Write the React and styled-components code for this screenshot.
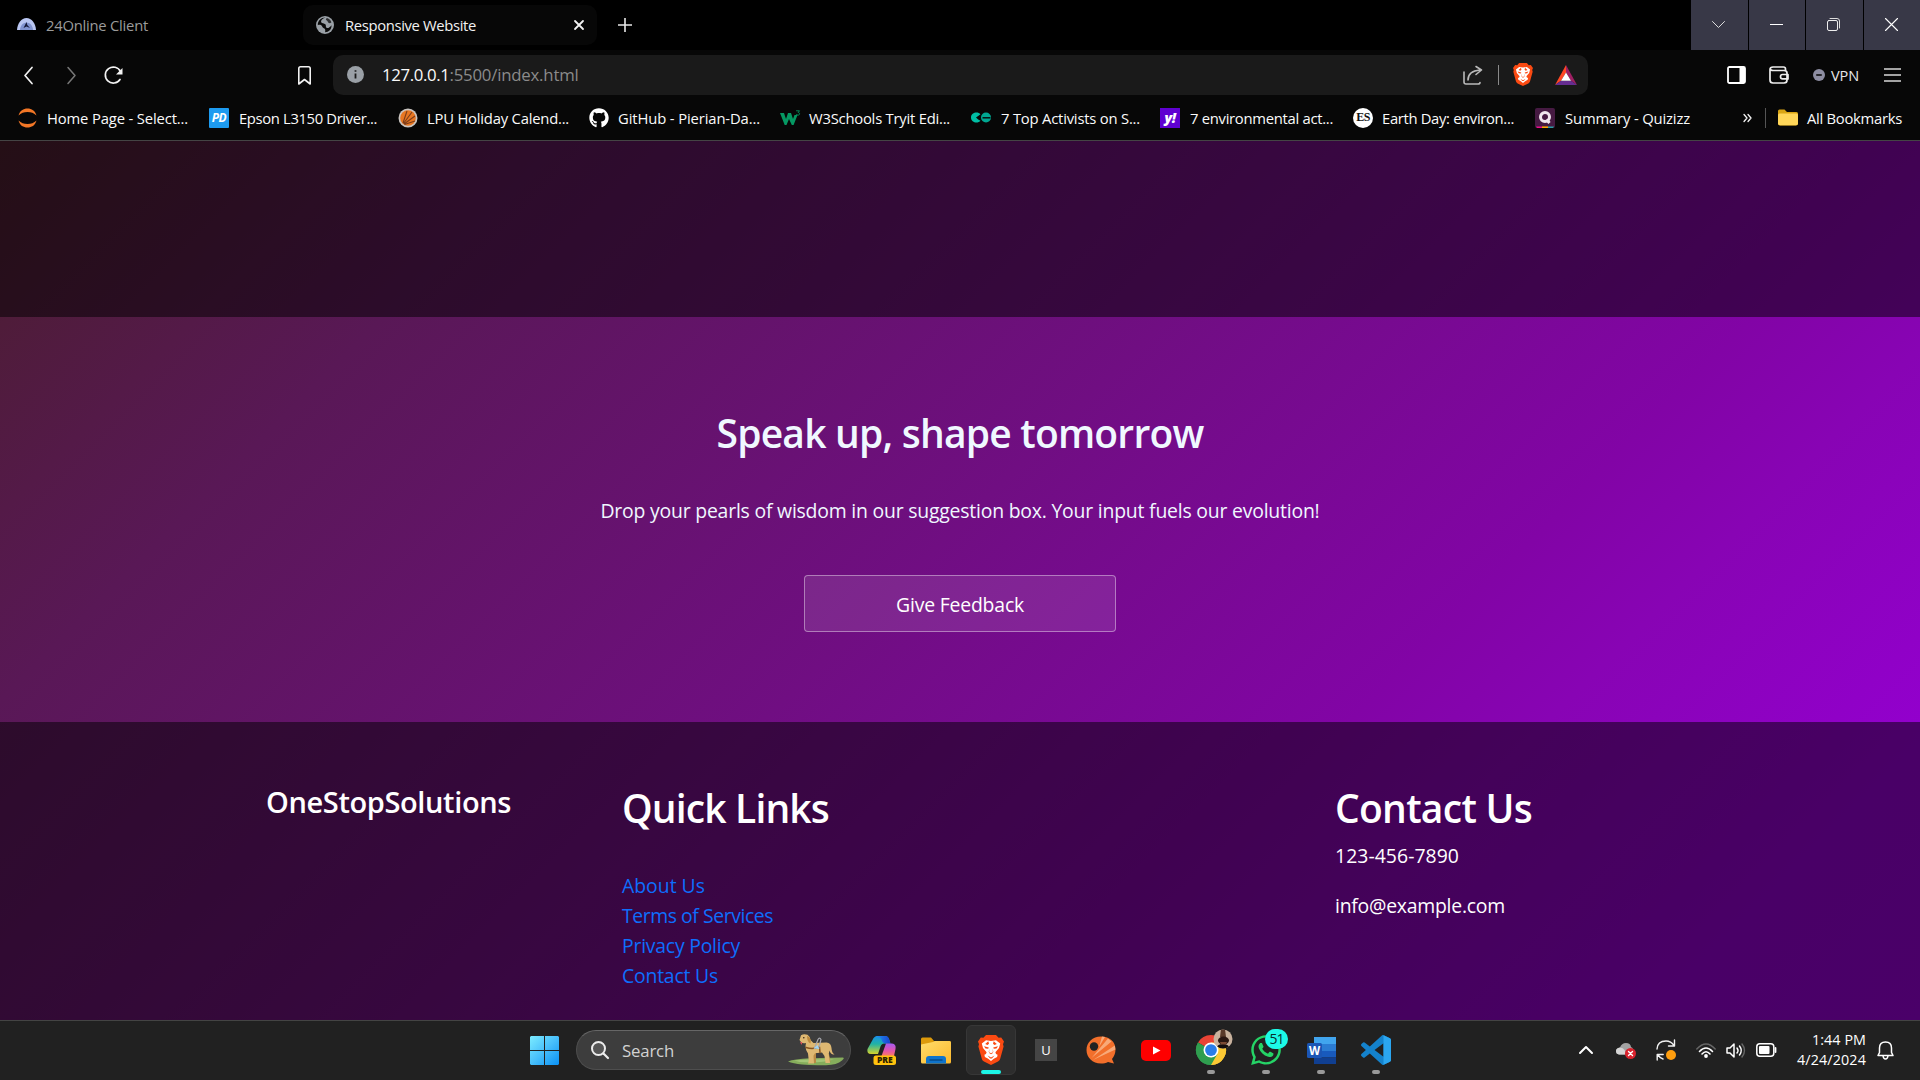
import React, { useLayoutEffect, useRef, useState } from "react";
import styled, { createGlobalStyle } from "styled-components";
import { FaGithub, FaWhatsapp } from "react-icons/fa";

const Global = createGlobalStyle`
  * { box-sizing: border-box; }
  html, body { margin: 0; padding: 0; background: #000; overflow: hidden; }
  body { font-family: "Open Sans", "Noto Sans", sans-serif; color: #fff; }
  svg { display: block; flex: none; overflow: visible; }
`;

/* ---------- text that is tracked to a fixed measure ---------- */
const Measure = styled.span`
  display: block;
  flex: none;
  width: ${(p) => p.$w}px;
  white-space: nowrap;
  font-size: ${(p) => (p.$size ? p.$size + "px" : "inherit")};
  color: ${(p) => p.$color || "inherit"};
  margin-left: ${(p) => p.$ml || 0}px;
`;

function Fit({ w, size, color, ml, children }) {
  const ref = useRef(null);
  const [track, setTrack] = useState(0);
  useLayoutEffect(() => {
    const natural = ref.current.getBoundingClientRect().width;
    setTrack((w - natural) / ref.current.textContent.length);
  }, [w]);
  return (
    <Measure $w={w} $size={size} $color={color} $ml={ml}>
      <span ref={ref} style={{ letterSpacing: track + "px" }}>{children}</span>
    </Measure>
  );
}

/* ---------- frame ---------- */
const Screen = styled.div`
  width: 1920px;
  height: 1080px;
  display: flex;
  flex-direction: column;
  overflow: hidden;
`;

const Gap = styled.div`
  flex: none;
  width: ${(p) => p.$w}px;
`;

const Grow = styled.div`
  flex: 1;
`;

/* ---------- browser chrome ---------- */
const TabStrip = styled.div`
  height: 50px;
  flex: none;
  display: flex;
  align-items: center;
  background: #000;
  font-size: 14.8px;
`;

const Tab = styled.div`
  height: 40px;
  width: ${(p) => p.$w}px;
  padding: 0 13px 1px ${(p) => p.$pl}px;
  display: flex;
  align-items: center;
  border-radius: 10px;
  background: ${(p) => (p.$active ? "#070707" : "transparent")};
  color: ${(p) => (p.$active ? "#f2f2f2" : "#9b9b9b")};
`;

const WindowButtons = styled.div`
  align-self: stretch;
  display: grid;
  grid-template-columns: 57px 56px 57px 56px;
  gap: 1px;
`;

const WindowButton = styled.div`
  display: flex;
  align-items: center;
  justify-content: center;
  padding: 0 2px 1px 0;
  background: #383847;
`;

const Toolbar = styled.div`
  height: 47px;
  flex: none;
  display: flex;
  align-items: center;
  padding-top: 3px;
  background: #070707;
`;

const AddressBar = styled.div`
  width: 1255px;
  height: 40px;
  display: flex;
  align-items: center;
  padding: 0 0 1px 14px;
  border-radius: 10px;
  background: #1a1a1a;
  font-size: 16.8px;
`;

const Divider = styled.div`
  width: 1px;
  height: 20px;
  background: ${(p) => p.$color || "#777"};
`;

const BookmarkBar = styled.div`
  height: 44px;
  flex: none;
  display: flex;
  align-items: center;
  padding-bottom: 2px;
  background: #070707;
  border-bottom: 1px solid #444444;
  font-size: 14.8px;
  color: #fafafa;
`;

const Bookmark = styled.div`
  flex: none;
  width: ${(p) => p.$w}px;
  display: flex;
  align-items: center;
`;

const Badge = styled.div`
  flex: none;
  width: 20px;
  height: 20px;
  display: flex;
  align-items: center;
  justify-content: center;
  border-radius: ${(p) => p.$r}px;
  background: ${(p) => p.$bg};
  color: ${(p) => p.$fg || "#fff"};
  font: ${(p) => p.$font};
  letter-spacing: ${(p) => p.$ls || 0}px;
`;

/* ---------- web page ---------- */
const Page = styled.main`
  height: 879px;
  flex: none;
  display: flex;
  flex-direction: column;
  background: linear-gradient(135deg, #4a1e2c 0%, #591856 20%, #700e82 48%, #8204a6 69%, #8804b4 76%, #9300ce 90%, #9400d2 100%);
`;

const Shade = styled.section`
  height: 176px;
  flex: none;
  background: rgba(0, 0, 0, 0.5);
`;

const Feedback = styled.section`
  height: 405px;
  flex: none;
  display: flex;
  flex-direction: column;
  align-items: center;
  padding-top: 92px;
  color: #f0f8ff;
`;

const Heading = styled.h2`
  margin: 0;
  font-size: 39px;
  line-height: 48px;
  font-weight: 600;
`;

const Lead = styled.p`
  margin: 39px 0 49px;
  font-size: 19.4px;
  line-height: 30px;
`;

const FeedbackButton = styled.button`
  width: 312px;
  height: 57px;
  display: flex;
  align-items: center;
  justify-content: center;
  padding: 2px 0 0;
  border: 1px solid rgba(255, 255, 255, 0.4);
  border-radius: 4px;
  background: rgba(255, 255, 255, 0.1);
  color: #fff;
  font-family: inherit;
  font-size: 19.4px;
  line-height: 30px;
`;

const Footer = styled.footer`
  flex: 1;
  display: grid;
  grid-template-columns: 356px 713px 1fr;
  padding: 62px 0 0 266px;
  background: rgba(0, 0, 0, 0.5);
  font-size: 19.4px;
  line-height: 30px;
`;

const Column = styled.div`
  display: flex;
  flex-direction: column;
`;

const BrandName = styled.h3`
  margin: 0;
  font-size: 29px;
  line-height: 36px;
  font-weight: 600;
`;

const Links = styled.nav`
  display: flex;
  flex-direction: column;
  margin-top: 39px;
  color: #0d6efd;
`;

const ContactList = styled.div`
  display: flex;
  flex-direction: column;
  gap: 20px;
  margin-top: 9px;
`;

/* ---------- taskbar ---------- */
const Taskbar = styled.div`
  height: 60px;
  flex: none;
  display: flex;
  align-items: center;
  padding: 0 0 1px 519px;
  border-top: 1px solid #444;
  background: #212121;
`;

const TaskItem = styled.div`
  position: relative;
  flex: none;
  width: 50px;
  height: 50px;
  margin-right: 5px;
  display: flex;
  align-items: center;
  justify-content: center;
  border-radius: 6px;
  border: 1px solid ${(p) => (p.$active ? "#373737" : "transparent")};
  background: ${(p) => (p.$active ? "#2d2d2d" : "transparent")};
`;

const Running = styled.div`
  position: absolute;
  left: 50%;
  bottom: 0;
  width: ${(p) => (p.$active ? 20 : 8)}px;
  height: 4px;
  border-radius: 2px;
  transform: translateX(-50%);
  background: ${(p) => (p.$active ? "#1cf5e6" : "#999")};
`;

const CountBadge = styled.div`
  position: absolute;
  left: 23px;
  top: 3px;
  width: 23px;
  height: 20px;
  border-radius: 10px;
  background: #1cfae6;
  color: #06302d;
  font-size: 14px;
  line-height: 20px;
  text-align: center;
  letter-spacing: -1px;
`;

const Avatar = styled.div`
  position: absolute;
  left: 26px;
  top: 3px;
`;

const Search = styled.div`
  width: 275px;
  height: 40px;
  flex: none;
  display: flex;
  align-items: center;
  margin: 0 5px 0 2px;
  padding-left: 14px;
  border-radius: 20px;
  border: 1px solid #4e4e4e;
  border-top-color: #666;
  background: #3d3d3d;
`;

const LetterTile = styled.div`
  width: 22px;
  height: 22px;
  background: #454545;
  font-size: 13px;
  line-height: 22px;
  text-align: center;
`;

const Clock = styled.div`
  display: flex;
  flex-direction: column;
  align-items: flex-end;
  font-size: 14.3px;
  line-height: 20px;
`;

/* ---------- icons ---------- */
const stroke = (c, w = 1.5) => ({ fill: "none", stroke: c, strokeWidth: w, strokeLinecap: "round", strokeLinejoin: "round" });

const BraveLion = ({ w, h }) => (
  <svg width={w} height={h} viewBox="0 0 26 30">
    <path d="M8 0h10l2.6 2.8 2.6-.3L26 6.4l-1 2.8.6 2.2-3.4 12.4c-.5 1.6-1.3 2.2-2.2 2.800L13 30l-7-3.400c-1-.6-1.800-1.300-2.200-2.800L.4 11.400 1 9.200 0 6.400l2.800-3.900 2.600.3z" fill="#fb4a12" />
    <path d="M8 5.200l5 .8 5-.8 4.200 3.300-1.200 4.500-3.600 4.200.6 1.800 1.600.7-.5 2.300-3.300 1.800L13 26l-2.800-2.200-3.300-1.800-.5-2.300L8 19l.6-1.800L5 13 3.800 8.500z" fill="#fff" />
    <path d="M10.300 6.200l.7 2.600-1.500 1.200-2.300-1zM15.700 6.200l-.7 2.600 1.500 1.200 2.300-1zM6 11.200l4.800 1.200-.6 1.300-2.700-.3zM20 11.200l-4.800 1.200.6 1.300 2.700-.3zM11.300 13.500l-.6 3.500 2.300 1.200 2.300-1.200-.6-3.500.2 4.500-1.900 1.200-1.900-1.200zM9.500 20.600L13 22.600l3.500-2-2.600 2.800h-1.800z" fill="#fb4a12" />
  </svg>
);

const Dome = () => (
  <svg width="19" height="13" viewBox="0 0 19 13">
    <path d="M0 12C.4 5 4.400 0 9.500 0S18.600 5 19 12z" fill="#b9c6f2" />
    <path d="M3 12c.3-4.400 3-7.400 6.500-7.400s6.200 3 6.500 7.400z" fill="#8093d0" />
    <path d="M6.500 10l3-6 .8 3 2.700 3-3.500-1.500z" fill="#14193a" />
  </svg>
);

const Globe = () => (
  <svg width="18" height="18" viewBox="0 0 18 18">
    <circle cx="9" cy="9" r="9" fill="#9aa0a6" />
    <path d="M9.500 1.600C6 3 4.500 4.600 5.200 6.300c.6 1.400 3 .8 4.200 2 1 1.100-.2 2.700 1.300 3.600 1.400.7 3-.6 4.800-2.700.3 3.800-2.700 7-6.500 7 .6-1.800.4-3.400-1.200-4C6 11.500 6.600 9.800 4.800 9c-1-.4-2-.3-3 .2C1.600 5 5 1.600 9.500 1.600z" fill="#0a0a0a" />
    <path d="M11 2.100c2.400.6 4 2.600 4.400 4.500-1.600 1-3.200.6-3.600-.8-.3-1-1.800-1.200-1.900-2.200 0-.7.600-1.100 1.100-1.500z" fill="#0a0a0a" opacity=".75" />
  </svg>
);

const BatIcon = () => (
  <svg width="22" height="20" viewBox="0 0 22 20">
    <path d="M11 0L0 20l6-4.200L11 7.500z" fill="#ff4724" />
    <path d="M11 0l11 20-6-4.200-5-8.300z" fill="#9e1f63" />
    <path d="M0 20h22l-6-4.200H6z" fill="#662d91" />
    <path d="M11 7.500l5 8.300H6z" fill="#fff" />
  </svg>
);

const Jupyter = () => (
  <svg width="19" height="20" viewBox="0 0 19 20">
    <path d="M.5 7.500C2 2.500 5.300.5 9.500.5s7.500 2 9 7C16 5 13 4 9.500 4S3 5 .5 7.500zM.5 12.500c1.500 5 4.800 7 9 7s7.500-2 9-7c-2.500 2.500-5.500 3.500-9 3.500s-6.500-1-9-3.500z" fill="#f37726" />
  </svg>
);

const LpuIcon = () => (
  <svg width="20" height="20" viewBox="0 0 20 20">
    <circle cx="10" cy="10" r="9.500" fill="#c9c4c0" />
    <circle cx="10" cy="10" r="7.800" fill="#e87722" />
    <path d="M5 15L9 3M5.500 15.500L14 4M6 16L17 8M6.500 16.500L17 13" stroke="#7c3d1a" strokeWidth="1.100" fill="none" />
  </svg>
);

const W3Icon = () => (
  <svg width="21" height="16" viewBox="0 0 21 16">
    <path d="M0 3h4l2 6 2-6h3l2 6 1.500-4h3L13.600 15h-1.800L9 9l-2.500 6H4.700z" fill="#059862" />
    <path d="M16.500.8h3l-1.400 1.700c2.200.2 1.800 2.800-.2 2.600-.8 0-1.300-.4-1.500-.8" {...stroke("#059862", 0.9)} />
  </svg>
);

const EarthOrgIcon = () => (
  <svg width="20" height="11" viewBox="0 0 20 11">
    <path d="M9.500 2.300C7 -1 0 .3 0 5.500S7 12 9.500 8.700L7.200 7.500 5 5.500l2.500-1.800z" fill="#00bfa5" />
    <circle cx="15" cy="5.500" r="5" fill="#00a892" />
    <path d="M11.500 5.800h8" stroke="#070707" strokeWidth="1.400" />
  </svg>
);

const QuizizzIcon = () => (
  <svg width="20" height="20" viewBox="0 0 20 20">
    <rect width="20" height="20" rx="2" fill="#461a42" />
    <path d="M1 18.400h6v1.600H2z" fill="#ec0b8c" /><path d="M7 18.400h6V20H7z" fill="#ffa402" /><path d="M13 18.400h6l-1 1.600h-5z" fill="#2d9da6" />
    <circle cx="10" cy="9" r="4.500" fill="none" stroke="#f0e6ee" strokeWidth="3" />
    <path d="M11.500 11.500l3 3.500" stroke="#f0e6ee" strokeWidth="3" />
  </svg>
);

const BookmarkFolder = () => (
  <svg width="20" height="17" viewBox="0 0 20 17">
    <path d="M0 2Q0 .5 1.500.5h5L9 3h9.500Q20 3 20 4.500v10q0 2-2 2H2q-2 0-2-2z" fill="#d9a514" />
    <path d="M0 6q0-1.500 1.500-1.500h17Q20 4.500 20 6v8.500q0 1.700-2 1.700H2q-2 0-2-1.700z" fill="#ffd659" />
  </svg>
);

const ShareIcon = () => (
  <svg width="20" height="20" viewBox="0 0 20 20">
    <path d="M1 7v10q0 2 2 2h12q2 0 2-1.500M5 15q0-9 12-10M13 1.500L18.500 5 13 9.500" {...stroke("#b9b9b9", 1.6)} />
  </svg>
);

const WalletIcon = () => (
  <svg width="20" height="18" viewBox="0 0 20 18">
    <path d="M16.500 4.500V3q0-2-2-2H4Q1 1 1 3.500V14q0 3 3 3h11q3 0 3-3V7q0-2.500-3-2.500H4.500Q1.500 4.500 1.500 3M19 8.500h-5.500q-2 0-2 2.200t2 2.200H19z" {...stroke("#ededed", 1.7)} />
  </svg>
);

const WindowsLogo = () => (
  <svg width="29" height="29" viewBox="0 0 29 29">
    <defs>
      <linearGradient id="win" x1="0" y1="0" x2="29" y2="29" gradientUnits="userSpaceOnUse">
        <stop offset="0" stopColor="#7cecff" /><stop offset=".5" stopColor="#48bffb" /><stop offset="1" stopColor="#0a91f5" />
      </linearGradient>
    </defs>
    <path d="M1 0h13v14H0V1zM15 0h13l1 1v13H15zM0 15h14v14H1l-1-1zM15 15h14v13l-1 1H15z" fill="url(#win)" />
  </svg>
);

const Dog = () => (
  <svg width="57" height="32" viewBox="0 0 57 32">
    <path d="M0 27.500q6-2.600 22-3.300L55 23.600q2 .6-1 2.900-5 4.500-16 4.700-14 .5-24-.6Q5 29.500 0 27.500z" fill="#86ad5c" />
    <path d="M6 26.500q20-2 40-1-14 4-34 2.500z" fill="#a3c577" />
    <path d="M24 18h4v11h-4zM36 17l5 3 1.500 8h-3L37 23z" fill="#b98a45" />
    <path d="M13 1.200Q16-.6 19.500.8q2.500 1.600 3 5.200l3 3 13-.4q4.500.4 5 5.400.3 5 3 6.500-3.800.5-5-4l-.8 3.500 1.300 9h-4.500l-1-7-2.500-3.500-7 .8-1.500 2.500.5 7.700h-6l.8-2.500-.8-7.500q-2.500-3-2.500-7.500l.5-3q-3.500.8-5-1L11.500 6z" fill="#deb872" />
    <path d="M19 2q4.800 1.500 3.500 7.500-3.500-1.500-3.500-7.500z" fill="#bd8a3d" />
    <path d="M12 8l2.300.3-.7 2.700z" fill="#e2505a" />
    <circle cx="15.800" cy="3.800" r=".8" fill="#33210f" />
    <path d="M18 13.500q7 2 13.500-.5l.5 5.500" {...stroke("#87531f", 1.5)} />
    <path d="M26.500 14l3.500-8.500q1.500-2.800 3 0L31 13" {...stroke("#a7a7ae", 1.200)} />
    <path d="M25.500 14.500l4-3.500 2 4z" fill="#9fd4f5" />
  </svg>
);

const Copilot = () => (
  <svg width="29" height="29" viewBox="0 0 29 29">
    <defs>
      <linearGradient id="cpA" x1="0" y1="0" x2="0" y2="1"><stop offset="0" stopColor="#1790ea" /><stop offset=".45" stopColor="#22b3a4" /><stop offset="1" stopColor="#d6d32b" /></linearGradient>
      <linearGradient id="cpB" x1="0" y1="0" x2="0" y2="1"><stop offset="0" stopColor="#a65af2" /><stop offset=".6" stopColor="#e655a8" /><stop offset="1" stopColor="#fb7b60" /></linearGradient>
      <linearGradient id="cpC" x1="0" y1="0" x2="1" y2="0"><stop offset="0" stopColor="#1e9bf0" /><stop offset="1" stopColor="#1a3fd0" /></linearGradient>
    </defs>
    <path d="M5.500 4Q7 0 11 0h7q3 0 4 3l1.500 4.500h-6q-3 0-4 3L11 18H4q-4.500 0-3.500-5z" fill="url(#cpA)" />
    <path d="M8 .8Q9.500 0 11 0h7q3 0 4 3l1.500 4.500h-6q-2.500-1-3-4Q13.500.8 8 .8z" fill="url(#cpC)" />
    <path d="M19 7.500h6q4.500.5 3.500 5.500L27 20H14.500z" fill="url(#cpB)" />
    <rect x="6.500" y="19.500" width="22.500" height="9.500" rx="2.500" fill="#ffc20e" />
    <text x="17.800" y="27.300" fontFamily="Open Sans, sans-serif" fontSize="8.500" fontWeight="800" textAnchor="middle" fill="#2b2000">PRE</text>
  </svg>
);

const Explorer = () => (
  <svg width="30" height="27" viewBox="0 0 30 27">
    <defs><linearGradient id="fold" x1="0" y1="0" x2="1" y2="1"><stop offset="0" stopColor="#ffdc6b" /><stop offset="1" stopColor="#fcb92d" /></linearGradient></defs>
    <path d="M0 2Q0 .5 1.500.5H10l3 3.500h15.500Q30 4 30 6v6H0z" fill="#dd9a0b" />
    <path d="M0 7.500L12 5l2-1h14.500Q30 4 30 5.500V25q0 1.500-1.500 1.500h-27Q0 26.500 0 25z" fill="url(#fold)" />
    <path d="M5 26.500V22q0-3 3-3h14q3 0 3 3v4.500z" fill="#0f74cc" />
    <path d="M8.500 23h13" stroke="#064b8c" strokeWidth="1.500" />
  </svg>
);

const Ball = () => (
  <svg width="30" height="28" viewBox="0 0 30 28">
    <path d="M15 .5C24 .5 29.500 6 29.500 13.500c0 4-1.500 7-3.500 9.500l2 4.500-6-1.500c-2 1-4.500 1.500-7 1.500C6.500 27.500.5 21.500.5 14S6.500.5 15 .5z" fill="#f26f2b" />
    <path d="M5.500 22L22 2.500l3.500 3zM7 24L28.800 9.500l.6 4zM13 11l3-10.500 3 .5z" fill="#f9b486" opacity=".85" />
    <circle cx="8" cy="10.500" r="4.200" fill="#222" />
  </svg>
);

const YouTube = () => (
  <svg width="30" height="21" viewBox="0 0 30 21">
    <rect width="30" height="21" rx="5" fill="#f00" />
    <path d="M12 6.500l7.500 4-7.500 4z" fill="#fff" />
  </svg>
);

const Chrome = () => (
  <svg width="30" height="30" viewBox="0 0 48 48">
    <path d="M24 24L3.200 12A24 24 0 0 1 44.800 12z" fill="#ea4335" />
    <path d="M24 24L44.800 12A24 24 0 0 1 24 48z" fill="#fcc934" />
    <path d="M24 24v24A24 24 0 0 1 3.200 12z" fill="#2f9e4f" />
    <path d="M24 12h20.800A24 24 0 0 1 24 48l10.400-18z" fill="#fcc934" />
    <path d="M3.200 12l10.400 18L24 36l10.400-6L24 48A24 24 0 0 1 3.200 12z" fill="#2f9e4f" />
    <circle cx="24" cy="24" r="12" fill="#fff" />
    <circle cx="24" cy="24" r="9.400" fill="#2a7de9" />
  </svg>
);

const Portrait = () => (
  <svg width="20" height="20" viewBox="0 0 20 20">
    <defs><clipPath id="face"><circle cx="10" cy="10" r="9.500" /></clipPath></defs>
    <g clipPath="url(#face)">
      <rect width="20" height="20" fill="#c9b29e" />
      <path d="M8 0h4l1 8H7z" fill="#5a3a2a" />
      <ellipse cx="10.500" cy="11.500" rx="5.500" ry="4" fill="#2a1712" />
      <path d="M3 20q1-5 7-5t7 5z" fill="#130d0d" />
      <path d="M7 13h7l-1 2.500H8z" fill="#7c4a33" />
    </g>
  </svg>
);

const Word = () => (
  <svg width="29" height="27" viewBox="0 0 29 27">
    <path d="M7 0h22v7H7z" fill="#41a5ee" /><path d="M7 7h22v7H7z" fill="#2b7cd3" />
    <path d="M7 14h22v6.500H7z" fill="#185abd" /><path d="M7 20.500h22V27H7z" fill="#103f91" />
    <rect x="0" y="6" width="15" height="15" rx="1.500" fill="#1b56b5" />
    <text x="7.500" y="17.500" fontFamily="Open Sans, sans-serif" fontSize="11.500" fontWeight="700" textAnchor="middle" fill="#fff">W</text>
  </svg>
);

const VsCode = () => (
  <svg width="30" height="30" viewBox="0 0 24 24">
    <path d="M23.150 2.587L18.210.21a1.494 1.494 0 0 0-1.705.29l-9.460 8.630-4.120-3.128a.999.999 0 0 0-1.276.057L.327 7.261A1 1 0 0 0 .326 8.740L3.899 12 .326 15.260a1 1 0 0 0 .001 1.479L1.650 17.940a.999.999 0 0 0 1.276.057l4.120-3.128 9.460 8.630a1.492 1.492 0 0 0 1.704.29l4.942-2.377A1.500 1.500 0 0 0 24 20.060V3.939a1.500 1.500 0 0 0-.85-1.352zm-5.146 14.861L10.826 12l7.178-5.448v10.896z" fill="#1482cc" />
    <path d="M18 .2v23.600l5.150-2.400A1.500 1.500 0 0 0 24 20.060V3.939a1.500 1.500 0 0 0-.85-1.352z" fill="#2ba6f0" />
  </svg>
);

const bookmarks = [
  { icon: <Jupyter />, gap: 10, label: "Home Page - Select...", w: 141, slot: 191 },
  { icon: <Badge $r={1} $bg="#1d9bf0" $font='italic 700 12px "Open Sans", sans-serif' $ls={-0.5}>PD</Badge>, gap: 10, label: "Epson L3150 Driver...", w: 138, slot: 189 },
  { icon: <LpuIcon />, gap: 9, label: "LPU Holiday Calend...", w: 142, slot: 191 },
  { icon: <FaGithub size={20} color="#fff" />, gap: 9, label: "GitHub - Pierian-Da...", w: 142, slot: 191 },
  { icon: <W3Icon />, gap: 8, label: "W3Schools Tryit Edi...", w: 141, slot: 191 },
  { icon: <EarthOrgIcon />, gap: 10, label: "7 Top Activists on S...", w: 139, slot: 189 },
  { icon: <Badge $r={0} $bg="#5f01d1" $font='italic 800 14px "Open Sans", sans-serif' $ls={-0.5}>y!</Badge>, gap: 10, label: "7 environmental act...", w: 143, slot: 193 },
  { icon: <Badge $r={10} $bg="#fff" $fg="#111" $font='700 12px "Liberation Serif", serif' $ls={-0.5}>ES</Badge>, gap: 9, label: "Earth Day: environ...", w: 132, slot: 182 },
  { icon: <QuizizzIcon />, gap: 10, label: "Summary - Quizizz", w: 125, slot: 208 },
];

const quickLinks = [
  ["About Us", 83],
  ["Terms of Services", 151],
  ["Privacy Policy", 118],
  ["Contact Us", 96],
];

export default function App() {
  return (
    <Screen>
      <Global />
      <TabStrip>
        <Tab $w={303} $pl={17}>
          <Dome />
          <Fit w={102} ml={10}>24Online Client</Fit>
        </Tab>
        <Tab $active $w={294} $pl={13}>
          <Globe />
          <Fit w={131} ml={11}>Responsive Website</Fit>
          <Grow />
          <svg width="10" height="10" viewBox="0 0 10 10"><path d="M1 1l8 8M9 1l-8 8" {...stroke("#f2f2f2", 1.8)} /></svg>
        </Tab>
        <Gap $w={21} />
        <svg width="14" height="14" viewBox="0 0 14 14"><path d="M7 0v14M0 7h14" stroke="#e8e8e8" strokeWidth="1.600" /></svg>
        <Grow />
        <WindowButtons>
          <WindowButton><svg width="13" height="7" viewBox="0 0 13 7"><path d="M.5.5l6 6 6-6" {...stroke("#ddd", 1)} /></svg></WindowButton>
          <WindowButton><svg width="13" height="1" viewBox="0 0 13 1"><path d="M0 .5h13" stroke="#fff" strokeWidth="1" /></svg></WindowButton>
          <WindowButton><svg width="13" height="13" viewBox="0 0 13 13"><rect x=".5" y="2.500" width="10" height="10" rx="1.500" {...stroke("#eee", 1)} /><path d="M3 .5h7q2.500 0 2.500 2.500v7" {...stroke("#ddd", 1)} /></svg></WindowButton>
          <WindowButton><svg width="13" height="13" viewBox="0 0 13 13"><path d="M.5.5l12 12M12.500.5l-12 12" {...stroke("#fff", 1.1)} /></svg></WindowButton>
        </WindowButtons>
      </TabStrip>

      <Toolbar>
        <Gap $w={24} />
        <svg width="9" height="17" viewBox="0 0 9 17"><path d="M8 .5l-7 8 7 8" {...stroke("#f2f2f2", 1.700)} /></svg>
        <Gap $w={34} />
        <svg width="9" height="17" viewBox="0 0 9 17"><path d="M1 .5l7 8-7 8" {...stroke("#777", 1.500)} /></svg>
        <Gap $w={28} />
        <svg width="19" height="18" viewBox="0 0 19 18"><path d="M16 13.500A8 8 0 1 1 16.500 5.500" {...stroke("#f2f2f2", 1.700)} /><path d="M18.500 2v6.500H12z" fill="#f2f2f2" /></svg>
        <Gap $w={175} />
        <svg width="13" height="19" viewBox="0 0 13 19"><path d="M.8 18V2.500Q.8.8 2.500.8h8q1.700 0 1.700 1.700V18L6.500 13.500z" {...stroke("#f2f2f2", 1.600)} /></svg>
        <Gap $w={22} />
        <AddressBar>
          <svg width="17" height="17" viewBox="0 0 17 17"><circle cx="8.500" cy="8.500" r="8.500" fill="#9aa0a6" /><path d="M8.500 7.500v5M8.500 4.300v1.500" stroke="#1a1a1a" strokeWidth="1.800" /></svg>
          <Fit w={67.500} ml={18} color="#fafafa">127.0.0.1</Fit>
          <Fit w={129} color="#8b8b8b">:5500/index.html</Fit>
          <Grow />
          <ShareIcon />
          <Gap $w={15} />
          <Divider $color="#8a8a8a" />
          <Gap $w={14} />
          <BraveLion w={20} h={23} />
          <Gap $w={22} />
          <BatIcon />
          <Gap $w={11} />
        </AddressBar>
        <Gap $w={139} />
        <svg width="19" height="18" viewBox="0 0 19 18"><rect x="1" y="1" width="17" height="16" rx="1.500" {...stroke("#fff", 1.800)} /><path d="M12.500 1h5.500v16h-5.500z" fill="#fff" /></svg>
        <Gap $w={23} />
        <WalletIcon />
        <Gap $w={24} />
        <svg width="12" height="12" viewBox="0 0 13 13"><circle cx="6.500" cy="6.500" r="6.500" fill="#8d8da1" /><path d="M3.500 6.500h6" stroke="#111" strokeWidth="1.800" /></svg>
        <Fit w={28} ml={6} size={14.500} color="#e8e8ea">VPN</Fit>
        <Gap $w={25} />
        <svg width="17" height="14" viewBox="0 0 17 14"><path d="M0 1h17M0 7h17M0 13h17" stroke="#d8d8d8" strokeWidth="1.500" /></svg>
      </Toolbar>

      <BookmarkBar>
        <Gap $w={18} />
        {bookmarks.map((b) => (
          <Bookmark key={b.label} $w={b.slot}>
            {b.icon}
            <Fit w={b.w} ml={b.gap}>{b.label}</Fit>
          </Bookmark>
        ))}
        <svg width="9" height="8" viewBox="0 0 9 8"><path d="M1 .5L4 4 1 7.500M5 .5L8 4 5 7.500" {...stroke("#f2f2f2", 1.300)} /></svg>
        <Gap $w={13} />
        <Divider $color="#555" />
        <Gap $w={12} />
        <BookmarkFolder />
        <Fit w={95} ml={9}>All Bookmarks</Fit>
      </BookmarkBar>

      <Page>
        <Shade />
        <Feedback>
          <Heading><Fit w={487}>Speak up, shape tomorrow</Fit></Heading>
          <Lead><Fit w={719}>Drop your pearls of wisdom in our suggestion box. Your input fuels our evolution!</Fit></Lead>
          <FeedbackButton><Fit w={128}>Give Feedback</Fit></FeedbackButton>
        </Feedback>
        <Footer>
          <Column>
            <BrandName><Fit w={245}>OneStopSolutions</Fit></BrandName>
          </Column>
          <Column>
            <Heading as="h3"><Fit w={207}>Quick Links</Fit></Heading>
            <Links>
              {quickLinks.map(([label, w]) => <Fit key={label} w={w}>{label}</Fit>)}
            </Links>
          </Column>
          <Column>
            <Heading as="h3"><Fit w={197}>Contact Us</Fit></Heading>
            <ContactList>
              <Fit w={124}>123-456-7890</Fit>
              <Fit w={170}>info@example.com</Fit>
            </ContactList>
          </Column>
        </Footer>
      </Page>

      <Taskbar>
        <TaskItem><WindowsLogo /></TaskItem>
        <Search>
          <svg width="18" height="18" viewBox="0 0 18 18"><circle cx="7.500" cy="7.500" r="6.500" fill="#555" stroke="#ececec" strokeWidth="2" /><path d="M12.500 12.500l4.500 4.500" {...stroke("#ececec", 2.200)} /></svg>
          <Fit w={52} ml={13} size={16.800} color="#d2d2d2">Search</Fit>
          <Grow />
          <Dog />
          <Gap $w={5} />
        </Search>
        <TaskItem><Copilot /></TaskItem>
        <TaskItem><Explorer /></TaskItem>
        <TaskItem $active><BraveLion w={26} h={30} /><Running $active /></TaskItem>
        <TaskItem><LetterTile>U</LetterTile></TaskItem>
        <TaskItem><Ball /></TaskItem>
        <TaskItem><YouTube /></TaskItem>
        <TaskItem><Chrome /><Avatar><Portrait /></Avatar><Running /></TaskItem>
        <TaskItem><FaWhatsapp size={34} color="#25d366" /><CountBadge>51</CountBadge><Running /></TaskItem>
        <TaskItem><Word /><Running /></TaskItem>
        <TaskItem><VsCode /><Running /></TaskItem>
        <Gap $w={173} />
        <svg width="14" height="8" viewBox="0 0 14 8"><path d="M1 7l6-6 6 6" {...stroke("#fff", 2)} /></svg>
        <Gap $w={23} />
        <svg width="20" height="17" viewBox="0 0 20 17"><path d="M3 12.500Q0 12 0 9t4-3.500Q5.500 1 10 1t5 4q2 .5 2 3v4.500z" fill="#a3a3a3" /><path d="M3 12.500Q0 12 0 9t4-3.500q3 0 5 3v4z" fill="#d5d5d5" /><circle cx="14.500" cy="11.500" r="5.500" fill="#d9232e" /><path d="M12.500 9.500l4 4M16.500 9.500l-4 4" {...stroke("#fff", 1.400)} /></svg>
        <Gap $w={20} />
        <svg width="20" height="20" viewBox="0 0 20 20"><path d="M1 9Q1.500 1 10 1q5 0 8 4.500M18.500 0v6h-6M7 19q-3-1-5.500-4.500M1.200 20v-5.500h6" {...stroke("#f2f2f2", 1.400)} /><circle cx="15" cy="15" r="5" fill="#ff9e0f" /></svg>
        <Gap $w={20} />
        <svg width="20" height="15" viewBox="0 0 20 15"><path d="M.8 6q9.200-10 18.400 0" {...stroke("#666", 1.500)} /><path d="M3.500 8.500q6.500-7 13 0M6 11q4-4.500 8 0" {...stroke("#fff", 1.600)} /><circle cx="10" cy="13" r="1.900" fill="#fff" /></svg>
        <Gap $w={10} />
        <svg width="20" height="15" viewBox="0 0 20 15"><path d="M1 5h3l4-4v13l-4-4H1zM11 5q2 2.500 0 5M13.500 3q3.500 4.500 0 9" {...stroke("#fff", 1.500)} /><path d="M16 1q5 6.500 0 13" {...stroke("#666", 1.500)} /></svg>
        <Gap $w={10} />
        <svg width="21" height="14" viewBox="0 0 21 14"><rect x=".8" y=".8" width="17" height="12.400" rx="3" {...stroke("#fff", 1.500)} /><rect x="3" y="3" width="10.500" height="8" rx="1" fill="#fff" /><path d="M19.500 5v4" {...stroke("#fff", 1.800)} /></svg>
        <Gap $w={20} />
        <Clock>
          <Fit w={54}>1:44 PM</Fit>
          <Fit w={69}>4/24/2024</Fit>
        </Clock>
        <Gap $w={11} />
        <svg width="17" height="19" viewBox="0 0 17 19"><path d="M1 14.500l1.500-3V7q0-6 6-6t6 6v4.500l1.500 3zM6 15q.5 3 2.500 3t2.500-3" {...stroke("#fff", 1.500)} /></svg>
      </Taskbar>
    </Screen>
  );
}
